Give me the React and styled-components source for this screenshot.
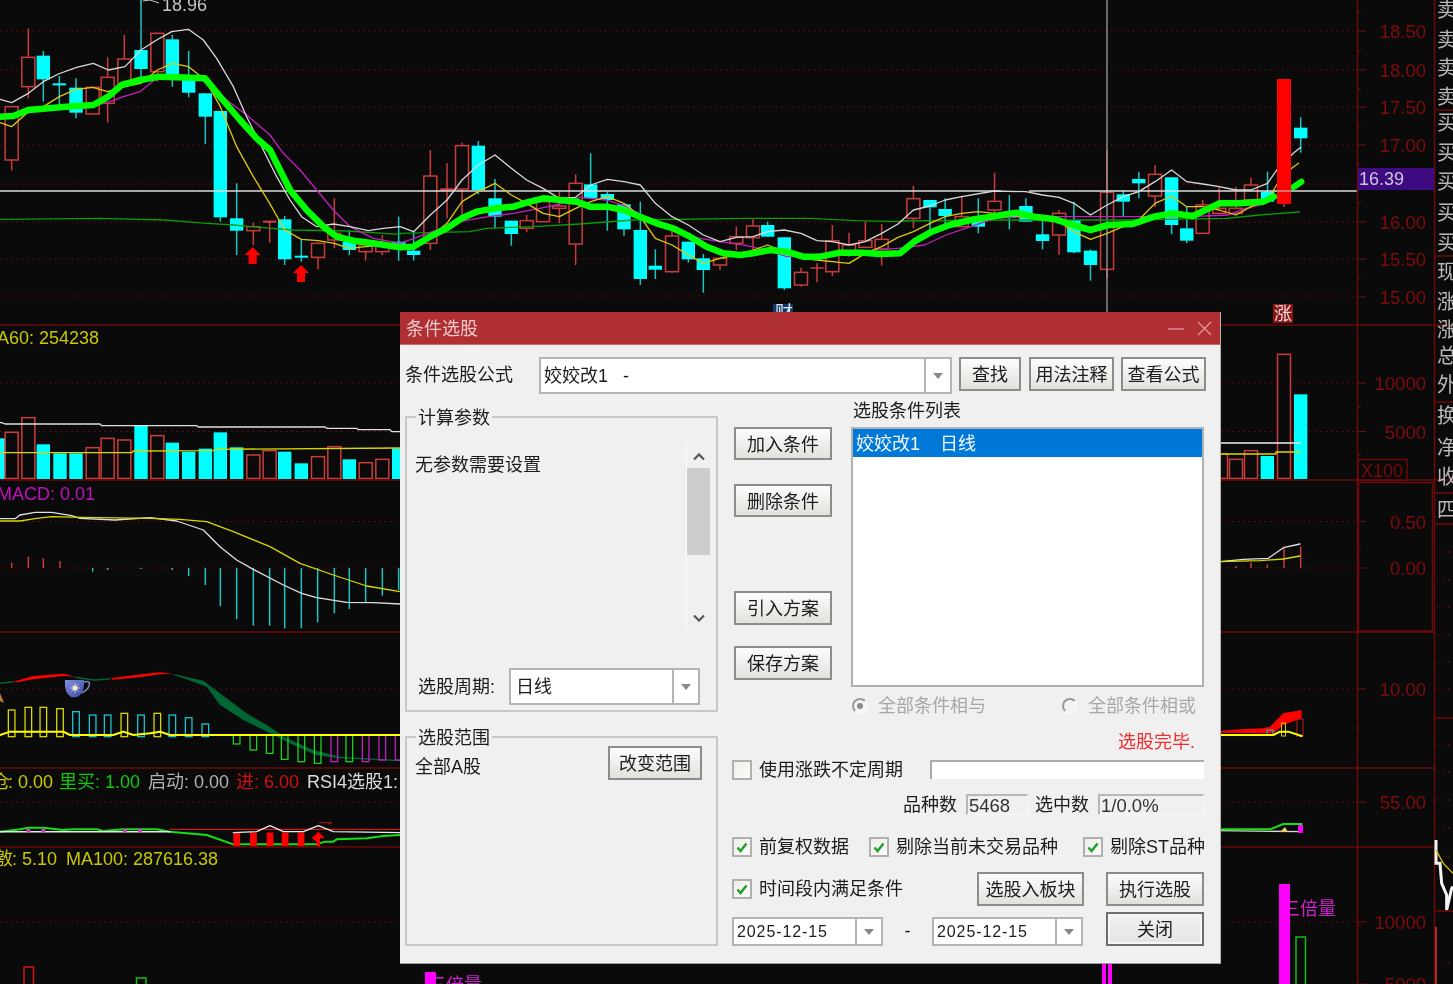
import React from "react";
import styled, { createGlobalStyle } from "styled-components";

const GlobalStyle = createGlobalStyle`
  * {
    box-sizing: border-box;
  }

  html,
  body {
    background: #0a0a0a;
    margin: 0;
    overflow: hidden;
  }
`;

const Page = styled.div`
  background: #0a0a0a;
  filter: blur(0.35px);
  font-family: "Liberation Sans", "Noto Sans CJK SC", sans-serif;
  height: 984px;
  overflow: hidden;
  position: relative;
  width: 1453px;
`;

/* ---------- chart ---------- */

const ChartSvg = styled.svg`
  display: block;
`;

const AxisLabel = styled.text`
  fill: #7e0c0c;
  font-size: 18.5px;
  text-anchor: end;
`;

const ChartText = styled.text`
  fill: ${(props) => props.$color || "#c8c800"};
  font-size: 18px;
`;

const SideGlyph = styled.text`
  fill: #b8b8b8;
  font-size: 20px;
`;

// the zoomed crops of the chart, mapped back to page pixels
const left = (x, y) => [x / 3, y / 3];
const mid = (x, y) => [400 + x / 3, 100 + y / 3];
const right = (x, y) => [900 + x / 2.835, y / 3];
const lower = (x, y) => [x / 3, 320 + y / 3];
const bottom = (x, y) => [x / 3, 650 + y / 3];
const rightLower = (x, y) => [1220 + x / 3, 320 + y / 3];
const rightBottom = (x, y) => [1220 + x / 3, 650 + y / 3];

const toPoints = (map, flat) => {
  const out = [];
  for (let i = 0; i < flat.length; i += 2) out.push(map(flat[i], flat[i + 1]).join(","));
  return out.join(" ");
};

const CANDLES = [
  [left, [[35, 320, 480, 320, 512, "h"], [85, 172, 260, 85, 295, "h"], [130, 167, 238, 153, 305, "c"], [178, 250, 256, 228, 315, "c"], [228, 263, 338, 235, 355, "c"], [278, 262, 342, 262, 342, "h"], [323, 232, 310, 172, 368, "h"], [373, 177, 255, 105, 255, "h"], [423, 150, 207, 0, 235, "c"], [472, 100, 215, 98, 245, "h"], [517, 118, 225, 105, 260, "c"], [566, 235, 278, 153, 292, "c"], [616, 280, 350, 280, 432, "c"], [661, 333, 652, 333, 665, "c"], [710, 655, 692, 550, 765, "c"], [760, 680, 692, 668, 735, "h"], [809, 662, 668, 662, 728, "r"], [854, 658, 778, 648, 795, "c"], [904, 767, 773, 720, 785, "c"], [954, 730, 772, 730, 808, "h"], [1003, 700, 720, 595, 745, "h"], [1048, 725, 750, 690, 765, "c"], [1097, 735, 755, 735, 782, "h"], [1147, 735, 755, 705, 765, "h"], [1196, 725, 745, 650, 782, "c"]]],
  [mid, [[41, 452, 465, 395, 482, "c"], [91, 228, 430, 150, 450, "h"], [141, 265, 272, 190, 355, "r"], [186, 137, 267, 128, 350, "h"], [235, 137, 270, 123, 283, "c"], [285, 295, 350, 237, 385, "c"], [334, 362, 402, 362, 437, "c"], [380, 362, 385, 345, 397, "h"], [429, 305, 365, 305, 365, "h"], [478, 318, 325, 275, 370, "h"], [527, 250, 432, 223, 495, "h"], [572, 253, 295, 160, 295, "c"], [622, 282, 300, 275, 392, "c"], [672, 313, 388, 313, 407, "c"], [721, 390, 537, 305, 555, "c"], [766, 497, 509, 448, 537, "c"], [816, 408, 515, 390, 520, "h"], [865, 425, 478, 425, 488, "c"], [910, 475, 510, 462, 578, "c"], [960, 475, 495, 475, 510, "h"], [1009, 410, 430, 380, 450, "h"], [1059, 378, 413, 358, 450, "h"], [1103, 375, 410, 365, 410, "c"], [1153, 412, 565, 412, 570, "c"], [1203, 517, 555, 503, 560, "h"], [1251, 502, 506, 490, 547, "r"], [1297, 422, 515, 375, 528, "h"], [1347, 435, 460, 398, 470, "h"], [1396, 422, 442, 365, 442, "h"], [1445, 418, 447, 372, 497, "h"]]],
  [right, [[38, 596, 655, 558, 685, "h"], [85, 600, 622, 600, 690, "c"], [128, 627, 648, 595, 690, "c"], [175, 650, 680, 590, 680, "h"], [222, 650, 680, 595, 700, "c"], [268, 604, 630, 518, 650, "h"], [310, 648, 654, 585, 688, "c"], [357, 618, 665, 595, 665, "c"], [404, 703, 723, 660, 748, "c"], [451, 640, 705, 630, 765, "h"], [493, 660, 757, 605, 760, "c"], [540, 752, 795, 748, 842, "c"], [587, 577, 808, 450, 835, "h"], [633, 583, 605, 570, 648, "c"], [677, 537, 550, 515, 595, "c"], [723, 523, 588, 495, 620, "h"], [770, 532, 675, 532, 702, "c"], [813, 685, 722, 620, 730, "c"], [858, 615, 700, 600, 700, "h"], [905, 625, 640, 560, 640, "h"], [952, 625, 640, 560, 640, "h"], [995, 555, 600, 533, 625, "h"], [1042, 575, 605, 515, 605, "c"], [1136, 383, 415, 352, 458, "c"]]],
];

const Candles = () =>
  CANDLES.flatMap(([map, list], g) =>
    list.map(([zx, top, bot, wickTop, wickBot, kind], i) => {
      const [x, y1] = map(zx, top);
      const y2 = map(zx, bot)[1];
      const w1 = map(zx, wickTop)[1];
      const w2 = map(zx, wickBot)[1];
      const stroke = kind === "c" ? "#1cc4c4" : "#c83c3c";
      return (
        <g key={`${g}-${i}`}>
          <line x1={x} x2={x} y1={w1} y2={w2} stroke={stroke} strokeWidth="1.5" />
          {kind === "h" ? (
            <rect x={x - 6.5} y={y1} width="13" height={y2 - y1} fill="#0a0a0a" stroke="#c83c3c" strokeWidth="1.5" />
          ) : (
            <rect x={x - 6.7} y={y1} width="13.4" height={y2 - y1} fill={kind === "c" ? "#00ffff" : "#d84040"} />
          )}
        </g>
      );
    })
  );

const WHITE_MA = [
  [left, [0, 298, 35, 308, 85, 280, 130, 245, 175, 222, 230, 202, 280, 190, 325, 210, 375, 200, 423, 150, 470, 120, 515, 95, 565, 88, 610, 120, 650, 175, 700, 260, 740, 350, 790, 450, 830, 530, 870, 600, 905, 650, 950, 680, 1000, 672, 1050, 680, 1105, 692, 1150, 685, 1200, 680]],
  [mid, [41, 395, 91, 345, 141, 300, 186, 240, 235, 195, 285, 165, 334, 205, 380, 240, 429, 265, 478, 295, 527, 292, 572, 255, 622, 238, 672, 245, 721, 255, 766, 310, 816, 350, 865, 375, 910, 405, 960, 425, 1009, 412, 1059, 410, 1103, 395, 1153, 390, 1203, 400, 1251, 422, 1297, 425, 1347, 435, 1396, 425, 1445, 400, 1494, 372]],
  [right, [38, 630, 85, 618, 128, 600, 175, 590, 268, 573, 357, 575, 404, 585, 451, 592, 493, 610, 540, 645, 587, 615, 633, 590, 677, 575, 723, 545, 770, 510, 813, 545, 858, 552, 905, 560, 952, 570, 995, 570, 1042, 550, 1068, 510, 1115, 460, 1136, 442]],
];

const YELLOW_MA = [
  [left, [0, 368, 35, 380, 85, 335, 130, 320, 178, 290, 228, 268, 278, 262, 323, 275, 373, 260, 423, 250, 472, 210, 517, 190, 566, 200, 616, 240, 661, 320, 710, 440, 760, 530, 809, 610, 854, 690, 904, 718, 954, 722, 1003, 730, 1048, 745, 1097, 740, 1147, 735]],
  [mid, [41, 440, 91, 410, 141, 370, 186, 305, 235, 275, 285, 250, 334, 285, 380, 310, 429, 340, 478, 350, 527, 325, 572, 305, 622, 290, 672, 310, 721, 350, 766, 415, 816, 435, 865, 465, 910, 490, 960, 475, 1009, 465, 1059, 450, 1103, 435, 1153, 455, 1203, 475, 1251, 480, 1297, 485, 1347, 490, 1396, 460, 1445, 440, 1494, 412]],
  [right, [38, 695, 85, 670, 128, 650, 175, 640, 222, 635, 268, 640, 451, 665, 493, 695, 540, 718, 587, 700, 677, 660, 723, 610, 770, 588, 813, 620, 858, 620, 905, 630, 952, 645, 995, 620, 1042, 600, 1068, 555, 1110, 505, 1130, 490]],
];

const MAGENTA_MA = [
  [left, [270, 320, 330, 305, 370, 290, 420, 275, 470, 235, 520, 225, 600, 235, 640, 270, 740, 345, 810, 405, 850, 460, 900, 510, 950, 570, 1000, 630, 1050, 680, 1120, 715, 1200, 730]],
  [mid, [180, 365, 250, 352, 340, 340, 420, 325, 480, 312, 540, 292, 620, 300, 680, 320, 760, 365, 840, 395, 900, 415, 960, 425, 1040, 437, 1100, 450, 1160, 470, 1494, 445]],
  [right, [70, 735, 130, 705, 200, 680, 270, 655, 350, 650, 820, 650, 930, 645, 980, 625, 1020, 615]],
];

const GREEN_THIN = [
  [left, [0, 658, 300, 655, 495, 660, 590, 668, 700, 675, 780, 682, 880, 690, 1040, 693, 1200, 703]],
  [mid, [0, 400, 210, 395, 260, 385, 400, 380, 540, 372, 700, 360, 1030, 355, 1230, 355, 1370, 362, 1500, 365]],
  [right, [0, 663, 300, 660, 640, 660, 925, 655, 1020, 645, 1132, 636]],
];

const GREEN_THICK = [
  [left, [0, 350, 40, 348, 85, 330, 130, 326, 180, 322, 230, 318, 280, 315, 325, 290, 365, 255, 420, 240, 480, 230, 530, 232, 615, 235, 660, 290, 720, 360, 770, 415, 810, 450, 840, 510, 870, 570, 920, 630, 970, 680, 1010, 710, 1060, 722, 1120, 730, 1200, 742]],
  [mid, [40, 440, 90, 410, 140, 385, 185, 355, 230, 335, 285, 325, 340, 320, 390, 305, 430, 295, 480, 300, 530, 305, 570, 320, 620, 320, 670, 330, 720, 350, 770, 370, 820, 385, 870, 410, 920, 440, 970, 460, 1020, 465, 1060, 460, 1110, 450, 1160, 455, 1210, 470, 1260, 470, 1320, 458, 1390, 458, 1440, 462, 1500, 460]],
  [right, [40, 725, 90, 695, 140, 675, 200, 660, 270, 648, 330, 638, 380, 650, 440, 658, 490, 675, 540, 690, 590, 675, 660, 672, 720, 650, 770, 640, 830, 648, 870, 628, 905, 610, 960, 610, 1030, 605, 1060, 590]],
];

const joinLine = (segs) => segs.map(([map, flat]) => toPoints(map, flat)).join(" ");

const Line = ({ points, color, width = 1.3 }) => (
  <polyline points={points} fill="none" stroke={color} strokeWidth={width} strokeLinejoin="round" strokeLinecap="round" />
);

const Dotted = ({ y, x1 = 0, x2 = 1357 }) => (
  <line x1={x1} x2={x2} y1={y} y2={y} stroke="#701010" strokeDasharray="1.5 4" />
);

const Rule = ({ x1 = 0, x2 = 1434, y }) => <line x1={x1} x2={x2} y1={y} y2={y} stroke="#6e0a0a" strokeWidth="1.5" />;

const Arrow = ({ x, y }) => (
  <polygon points={`${x},${y} ${x + 8},${y + 8} ${x + 4},${y + 8} ${x + 4},${y + 17} ${x - 4},${y + 17} ${x - 4},${y + 8} ${x - 8},${y + 8}`} fill="#ff0000" />
);

const MAIN_GRID = [31, 70, 107, 145, 184, 222, 259, 296];

const MainPanel = () => (
  <g>
    {MAIN_GRID.map((y) => (
      <Dotted key={y} y={y} />
    ))}
    <Candles />
    <line x1="1107" x2="1107" y1="0" y2="312" stroke="#a8a8a8" strokeWidth="1.2" />
    <line x1="0" x2="1001" y1="191" y2="191" stroke="#dcdcdc" strokeWidth="1.5" />
    <line x1="1029" x2="1357" y1="191" y2="191" stroke="#dcdcdc" strokeWidth="1.5" />
    <Line points={joinLine(GREEN_THIN)} color="#0a9a0a" />
    <Line points={joinLine(MAGENTA_MA)} color="#c020c0" />
    <Line points={joinLine(YELLOW_MA)} color="#e0c810" />
    <Line points={joinLine(WHITE_MA)} color="#d8d8d8" />
    <Line points={joinLine(GREEN_THICK)} color="#00ff00" width={6.5} />
    <Line points={toPoints(right, [1115, 562, 1138, 545])} color="#00ff00" width={6} />
    <rect x="1277" y="79" width="14" height="125" fill="#ff0000" />
    <line x1="1284" x2="1284" y1="204" y2="207" stroke="#c83c3c" strokeWidth="1.5" />
    <line x1="1277" x2="1291" y1="191" y2="191" stroke="#d09090" strokeWidth="1.5" />
    <line x1="141" x2="141" y1="0" y2="3" stroke="#1cc4c4" />
    <polyline points="143,1 150,0 159,3" fill="none" stroke="#c8c8c8" />
    <ChartText x="162" y="11" $color="#c4c4c4">18.96</ChartText>
    <Arrow x={252.7} y={247} />
    <Arrow x={301} y={265} />
    <rect x="773" y="304" width="20" height="10" fill="#0a3a70" />
    <ChartText x="775" y="319" $color="#e8e8e8">财</ChartText>
    <rect x="1273" y="304" width="20" height="19" fill="#8a1414" />
    <ChartText x="1274" y="320" $color="#f0d8d8">涨</ChartText>
  </g>
);

const VOLUME = [
  [-2, 355, "c"], [35, 337, "h"], [85, 293, "h"], [130, 373, "c"], [180, 400, "c"], [228, 400, "c"], [278, 383, "h"], [323, 355, "h"], [373, 360, "h"], [423, 317, "c"], [472, 347, "h"], [517, 368, "c"], [566, 395, "c"], [616, 386, "c"], [661, 337, "c"], [710, 382, "c"], [760, 405, "h"], [809, 392, "h"], [854, 395, "c"], [904, 430, "c"], [954, 410, "h"], [1003, 380, "h"], [1048, 418, "c"], [1097, 428, "h"], [1147, 418, "h"], [1196, 385, "c"],
  [3663, 402, "h"], [3708, 418, "h"], [3753, 392, "h"], [3802, 408, "c"], [3852, 103, "h"], [3902, 223, "c"],
];

const VolumePanel = () => (
  <g>
    <Dotted y={383} />
    <Dotted y={431.5} />
    {VOLUME.map(([zx, top, kind]) => {
      const [x, y] = lower(zx, top);
      return kind === "h" ? (
        <rect key={zx} x={x - 6.5} y={y} width="13" height={478.5 - y} fill="#0a0a0a" stroke="#c83c3c" strokeWidth="1.5" />
      ) : (
        <rect key={zx} x={x - 6.7} y={y} width="13.4" height={479 - y} fill="#00ffff" />
      );
    })}
    <Line points={toPoints(lower, [0, 308, 5, 308, 15, 312, 300, 312, 305, 317, 590, 317, 595, 321, 975, 321, 980, 325, 1070, 325, 1075, 329, 1170, 329, 1175, 335, 1200, 335])} color="#e0e0e0" />
    <Line points={toPoints(lower, [0, 398, 395, 398, 400, 393, 640, 392, 645, 388, 1200, 384])} color="#d8d800" />
    <Line points="1220,443 1300,443" color="#f0f0f0" />
    <Line points="1220,454 1276,454 1276,452 1300,452" color="#d8d800" />
    <ChartText x="-3" y="344">A60: 254238</ChartText>
  </g>
);

const MACD_BARS = [
  [35, 728], [85, 710], [130, 715], [180, 723], [278, 755], [323, 750], [423, 747], [517, 750], [566, 768], [616, 795], [661, 858], [710, 898], [760, 917], [809, 917], [854, 925], [904, 925], [953, 907], [1003, 880], [1048, 867], [1097, 847], [1147, 827], [1196, 810],
];

const MacdPanel = () => (
  <g>
    <Dotted y={521.5} />
    <Dotted y={568} />
    {MACD_BARS.map(([zx, end]) => {
      const [x, y] = lower(zx, end);
      return <line key={zx} x1={x} x2={x} y1="568" y2={y} stroke={end < 744 ? "#c83c3c" : "#1cc4c4"} strokeWidth="1.5" />;
    })}
    {[[48, 738], [93, 728], [142, 733], [192, 683], [242, 680]].map(([zx, end]) => {
      const [x, y] = rightLower(zx, end);
      return <line key={zx} x1={x} x2={x} y1="568" y2={y} stroke="#c83c3c" strokeWidth="1.5" />;
    })}
    <Line points={toPoints(lower, [0, 596, 45, 596, 60, 585, 105, 577, 155, 577, 215, 587, 240, 595, 345, 600, 450, 593, 530, 603, 610, 630, 660, 680, 710, 720, 760, 748, 850, 795, 905, 820, 950, 833, 1040, 847, 1120, 848, 1200, 852])} color="#e0e0e0" />
    <Line points={toPoints(lower, [0, 603, 60, 603, 105, 596, 155, 590, 240, 592, 450, 595, 540, 598, 620, 605, 700, 635, 810, 680, 900, 730, 1000, 765, 1100, 798, 1200, 815])} color="#d8d800" />
    <Line points={toPoints(rightLower, [0, 725, 70, 718, 145, 715, 190, 683, 240, 672])} color="#e0e0e0" />
    <Line points={toPoints(rightLower, [0, 725, 120, 722, 190, 717, 240, 708])} color="#d8d800" />
    <ChartText x="-3" y="500" $color="#c010c0">MACD: 0.01</ChartText>
  </g>
);

const HOLLOW_BARS = [
  [35, 180, "#d8d800"], [85, 172, "#d8d800"], [130, 172, "#d8d800"], [180, 176, "#d8d800"], [228, 185, "#1cc4d4"], [278, 195, "#1cc4d4"], [323, 195, "#1cc4d4"], [373, 190, "#d8d800"], [423, 195, "#1cc4d4"], [472, 190, "#d8d800"], [517, 195, "#1cc4d4"], [566, 203, "#1cc4d4"], [616, 222, "#1cc4d4"],
  [710, 282, "#20d020"], [760, 300, "#20d020"], [809, 310, "#20d020"], [854, 328, "#20d020"], [904, 335, "#20d020"], [953, 340, "#20d020"], [1003, 335, "#c020c0"], [1048, 335, "#20d020"], [1097, 335, "#c020c0"], [1147, 330, "#c020c0"], [1196, 330, "#c020c0"],
];

const Cup = () => (
  <g>
    <defs>
      <linearGradient id="cupFill" x1="0" x2="1" y1="0" y2="1">
        <stop offset="0" stopColor="#8090e0" />
        <stop offset="1" stopColor="#3c48a8" />
      </linearGradient>
    </defs>
    <path d="M84 682 q7 -2 5 4 q-2 5 -8 7" fill="none" stroke="#8088c0" strokeWidth="1.5" />
    <path d="M65 680 h19 q1 11 -5 16 q-3 2 -8 1 q-7 -4 -6 -17z" fill="url(#cupFill)" />
    <circle cx="75" cy="688" r="2.5" fill="#fff8d0" />
    <path d="M75 683 v10 M70 688 h10 M71.5 684.5 l7 7 M78.5 684.5 l-7 7" stroke="#e8e8c0" strokeWidth="0.8" />
  </g>
);

const SignalPanel = () => (
  <g>
    <Dotted y={689} />
    <polyline points={toPoints(bottom, [0, 100, 40, 95])} fill="none" stroke="#006633" strokeWidth="1.5" />
    <polygon points={toPoints(bottom, [40, 95, 100, 78, 190, 71, 225, 80, 190, 78, 100, 88, 50, 97])} fill="#ff0000" />
    <polyline points={toPoints(bottom, [225, 82, 280, 90, 330, 87])} fill="none" stroke="#006633" strokeWidth="1.5" />
    <polygon points={toPoints(bottom, [330, 85, 430, 72, 480, 67, 520, 72, 480, 73, 430, 80, 340, 89])} fill="#ff0000" />
    <polygon points={toPoints(bottom, [520, 72, 610, 92, 660, 130, 740, 190, 800, 225, 860, 265, 940, 300, 1020, 320, 1200, 330, 1200, 334, 1020, 325, 950, 316, 880, 285, 810, 250, 730, 210, 660, 165, 620, 110, 560, 88, 520, 75])} fill="#006633" />
    {HOLLOW_BARS.map(([zx, end, color]) => {
      const [x, y] = bottom(zx, end);
      const y0 = end < 255 ? 650 + 260 / 3 : 650 + 256 / 3;
      return <rect key={zx} x={x - 3.3} y={Math.min(y, y0)} width="6.6" height={Math.abs(y - y0)} fill="none" stroke={color} strokeWidth="1.3" />;
    })}
    <Line points={toPoints(bottom, [0, 255, 30, 245, 190, 245, 210, 255, 340, 255, 370, 245, 400, 255, 450, 250, 480, 245, 510, 255, 1200, 255])} color="#ffff00" width={2} />
    <Cup />
    <polygon points="0,693 4,703 0,701" fill="#c08030" />
    <polygon points={toPoints(rightBottom, [0, 243, 60, 238, 130, 235, 150, 230, 190, 190, 245, 180, 245, 205, 190, 225, 160, 250, 0, 248])} fill="#ff0000" />
    <rect x="1267" y="730" width="6" height="5" fill="none" stroke="#1cc4d4" />
    <rect x="1281.5" y="723" width="4" height="13" fill="none" stroke="#d8c800" />
    <rect x="1297" y="719" width="6" height="17" fill="none" stroke="#c01818" />
    <Line points={toPoints(rightBottom, [0, 255, 160, 255, 180, 245, 205, 245, 245, 258])} color="#ffff00" width={2} />
    <ChartText x="-8" y="788">仓</ChartText>
    <ChartText x="8" y="788">: 0.00</ChartText>
    <ChartText x="59" y="788" $color="#10c810">里买: 1.00</ChartText>
    <ChartText x="148" y="788" $color="#b0b0b0">启动: 0.00</ChartText>
    <ChartText x="236" y="788" $color="#d01010">进: 6.00</ChartText>
    <ChartText x="307" y="788" $color="#dcdcdc">RSI4选股1:</ChartText>
  </g>
);

const RsiPanel = () => (
  <g>
    <Dotted y={802} />
    <Line points={toPoints(bottom, [510, 538, 1200, 538])} color="#d01818" />
    <Line points={toPoints(bottom, [0, 545, 60, 538, 85, 533, 130, 533, 190, 540, 220, 538, 290, 538, 310, 543, 370, 538, 470, 538, 510, 545, 620, 555, 700, 583, 950, 583, 975, 575, 1000, 575, 1010, 568, 1100, 565, 1150, 558, 1200, 555])} color="#14e014" width={2} />
    <Line points={toPoints(bottom, [0, 545, 510, 545])} color="#e8e8e8" width={1.5} />
    {[700, 750, 800, 845, 893].map((zx) => (
      <rect key={zx} x={zx / 3} y={832.5} width="6.8" height="14" fill="#ff0000" />
    ))}
    <Line points={toPoints(bottom, [700, 548, 770, 545, 810, 527, 850, 545, 910, 545, 955, 527, 1000, 545, 1200, 548])} color="#e8e8e8" />
    {[85, 130, 375, 420].map((zx) => (
      <rect key={zx} x={zx / 3 - 2} y="829" width="4" height="3" fill="#d040d0" />
    ))}
    <polygon points={toPoints(bottom, [955, 545, 975, 565, 960, 565, 960, 590, 950, 590, 950, 575, 935, 565])} fill="#ff0000" />
    <polyline points={toPoints(bottom, [955, 518, 995, 518, 985, 522])} fill="none" stroke="#c01818" />
    <Line points={toPoints(rightBottom, [0, 542, 245, 545])} color="#d8d8d8" />
    <Line points={toPoints(rightBottom, [0, 538, 150, 538, 190, 522, 245, 522])} color="#14e014" width={2} />
    <rect x="1298" y="825" width="5" height="8" fill="#ff00ff" />
    <polygon points="1280,832 1285,827 1288,832" fill="#e8d060" />
  </g>
);

const VolumeBottomPanel = () => (
  <g>
    <Dotted y={922} />
    <rect x="24" y="967" width="9.5" height="20" fill="none" stroke="#d01818" strokeWidth="1.5" />
    <rect x="136.5" y="978" width="9.5" height="10" fill="none" stroke="#10c010" strokeWidth="1.5" />
    <ChartText x="428" y="991" $color="#d020d0">三倍量</ChartText>
    <rect x="425" y="972" width="11" height="12" fill="#ff00ff" />
    <rect x="1102" y="964" width="4" height="20" fill="#ff00ff" />
    <rect x="1108" y="964" width="4" height="20" fill="#ff00ff" />
    <ChartText x="1282" y="915" $color="#d020d0">三倍量</ChartText>
    <rect x="1279" y="884" width="11" height="100" fill="#ff00ff" />
    <rect x="1296" y="937" width="9.5" height="50" fill="none" stroke="#10c010" strokeWidth="1.5" />
    <ChartText x="-5" y="865">敫</ChartText>
    <ChartText x="12" y="865">: 5.10</ChartText>
    <ChartText x="66" y="865">MA100: 287616.38</ChartText>
  </g>
);

const AXIS = [
  ["18.50", 31], ["18.00", 70], ["17.50", 107], ["17.00", 145], ["16.00", 222], ["15.50", 259], ["15.00", 297],
  ["10000", 383], ["5000", 431.5], ["0.50", 521.5], ["0.00", 568], ["10.00", 689], ["55.00", 802], ["10000", 922], ["5000", 984],
];

const MINOR_TICKS = [12, 51, 89, 126, 164, 203, 240, 278, 407, 455, 545, 728, 925, 960];

const SIDE_LABELS = [
  ["卖", 10], ["卖", 40], ["卖", 68], ["卖", 97], ["买", 123], ["买", 153], ["买", 182], ["买", 213], ["买", 243],
  ["现", 272], ["涨", 302], ["涨", 330], ["总", 356], ["外", 385], ["换", 416], ["净", 448], ["收", 477], ["四", 510],
];

const Axis = () => (
  <g>
    <line x1="1357.5" x2="1357.5" y1="0" y2="984" stroke="#6e0a0a" strokeWidth="1.5" />
    <line x1="1434.5" x2="1434.5" y1="0" y2="984" stroke="#6e0a0a" strokeWidth="1.5" />
    {[325, 480].map((y) => (
      <Rule key={y} y={y} x2={1453} />
    ))}
    {[632, 768, 847].map((y) => (
      <Rule key={y} y={y} />
    ))}
    {[110, 256, 402, 493, 524, 718, 911].map((y) => (
      <Rule key={y} x1={1434} x2={1453} y={y} />
    ))}
    {[552, 580, 607, 635, 662, 689, 745, 772, 800, 828, 857, 963].map((y) => (
      <Dotted key={y} y={y} x1={1437} x2={1453} />
    ))}
    <rect x="1358.5" y="482.5" width="74" height="148.5" fill="none" stroke="#6e0a0a" strokeWidth="1.5" />
    {AXIS.map(([label, y]) => (
      <g key={`${label}-${y}`}>
        <line x1="1357" x2="1366" y1={y} y2={y} stroke="#7a0a0a" />
        <AxisLabel x="1426" y={y + 7}>{label}</AxisLabel>
      </g>
    ))}
    {MINOR_TICKS.map((y) => (
      <line key={y} x1="1357" x2="1361" y1={y} y2={y} stroke="#7a0a0a" />
    ))}
    <rect x="1358" y="168" width="76" height="22" fill="#3d0a80" />
    <ChartText x="1359" y="185" $color="#c8c8d8">16.39</ChartText>
    <rect x="1358" y="459.5" width="49" height="21" fill="none" stroke="#6e0a0a" strokeWidth="1.5" />
    <ChartText x="1361" y="477" $color="#7a0a0a">X100</ChartText>
    {SIDE_LABELS.map(([glyph, y]) => (
      <SideGlyph key={y} x="1437" y={y + 7}>{glyph}</SideGlyph>
    ))}
    <polyline points={toPoints(rightBottom, [648, 570, 648, 640, 660, 640, 665, 700, 680, 735, 680, 780, 695, 715, 699, 710])} fill="none" stroke="#f4f4f4" strokeWidth="3" />
    <polyline points={toPoints(rightBottom, [648, 600, 670, 640, 699, 670])} fill="none" stroke="#d8c810" strokeWidth="1.3" />
    <line x1="1436" x2="1436" y1="927" y2="984" stroke="#c83c3c" strokeWidth="1.5" />
  </g>
);

const Chart = () => (
  <ChartSvg width="1453" height="984" viewBox="0 0 1453 984">
    <MainPanel />
    <VolumePanel />
    <MacdPanel />
    <SignalPanel />
    <RsiPanel />
    <VolumeBottomPanel />
    <Axis />
  </ChartSvg>
);

/* ---------- dialog ---------- */

const Dialog = styled.div`
  background: #f0f0f0;
  border-bottom: 1px solid #9c9c9c;
  border-right: 1px solid #b4b4b4;
  color: #1c1c1c;
  display: flex;
  flex-direction: column;
  font-size: 18px;
  height: 652px;
  left: 400px;
  line-height: 24px;
  position: absolute;
  top: 312px;
  width: 821px;
`;

const TitleBar = styled.div`
  align-items: center;
  background: #b02f33;
  border-bottom: 1px solid #c86a6a;
  color: #eec8c8;
  display: flex;
  flex: none;
  height: 33px;
  justify-content: space-between;
  padding: 1px 8px 0 6px;
`;

const TitleIcons = styled.div`
  display: flex;
  gap: 12px;
`;

const Body = styled.div`
  display: flex;
  flex-direction: column;
  padding: 12px 14px 0 5px;
`;

const FormulaRow = styled.div`
  align-items: flex-start;
  display: flex;
  height: 37px;
`;

const RowLabel = styled.div`
  flex: none;
  line-height: 36px;
  width: ${(props) => props.$width}px;
`;

const Combo = styled.div`
  background: #fff;
  border: 2px solid #b4b4b4;
  display: flex;
  flex: none;
  font-size: ${(props) => props.$fontSize || 18}px;
  height: ${(props) => props.$height || 37}px;
  letter-spacing: ${(props) => (props.$fontSize ? "0.9px" : "0")};
  width: ${(props) => props.$width}px;
`;

const ComboValue = styled.div`
  align-items: center;
  display: flex;
  flex: 1;
  padding-left: ${(props) => props.$indent || 3}px;
  padding-top: 1px;
  white-space: pre;
`;

const ComboArrow = styled.div`
  align-items: center;
  border-left: 2px solid #b4b4b4;
  display: flex;
  flex: none;
  justify-content: center;
  width: 26px;

  &::after {
    border-left: 5px solid transparent;
    border-right: 5px solid transparent;
    border-top: 6px solid #8a8a8a;
    content: "";
  }
`;

const Button = styled.button`
  background: linear-gradient(#fdfdfd, #e2e1dc);
  border: 2px solid #8c8c8a;
  color: #1c1c1c;
  flex: none;
  font-family: inherit;
  font-size: 18px;
  height: ${(props) => props.$height || 34}px;
  line-height: 24px;
  margin: ${(props) => props.$margin || 0};
  padding: 2px 0 0;
  width: ${(props) => props.$width || 98}px;
`;

const DefaultButton = styled(Button)`
  background: linear-gradient(#f2f2f2, #e4e4e2);
  border-color: #6e6e6c;
  box-shadow: inset 0 0 0 2px #f6f6f6;
`;

const Main = styled.div`
  display: flex;
`;

const LeftColumn = styled.div`
  display: flex;
  flex: none;
  flex-direction: column;
  gap: 24px;
  padding-top: 22px;
  width: 313px;
`;

const GroupBox = styled.div`
  border: 2px solid #c8c8c8;
  height: ${(props) => props.$height}px;
  position: relative;
`;

const Legend = styled.div`
  background: #f0f0f0;
  left: 9px;
  padding: 0 2px;
  position: absolute;
  top: -12px;
`;

const ParamArea = styled.div`
  display: flex;
  height: 187px;
  margin-top: 25px;
`;

const ParamText = styled.div`
  flex: 1;
  line-height: 26px;
  padding: 9px 0 0 8px;
`;

const ScrollBar = styled.div`
  border-left: 1px solid #fbfbfb;
  display: flex;
  flex: none;
  flex-direction: column;
  margin-right: 6px;
  width: 24px;
`;

const ScrollArrow = styled.div`
  align-items: ${(props) => (props.$down ? "flex-end" : "flex-start")};
  display: flex;
  flex: none;
  height: 25px;
  justify-content: center;
  padding: ${(props) => (props.$down ? "0 0 8px" : "10px 0 0")};
`;

const ScrollThumb = styled.div`
  background: #cdcdcd;
  height: 87px;
`;

const ScrollTrack = styled.div`
  flex: 1;
`;

const PeriodRow = styled.div`
  align-items: center;
  display: flex;
  margin-top: 38px;
  padding-left: 11px;
`;

const RangeRow = styled.div`
  align-items: flex-start;
  display: flex;
  justify-content: space-between;
  padding: 8px 14px 0 8px;
`;

const RangeText = styled.div`
  margin-top: 9px;
`;

const RightColumn = styled.div`
  flex: none;
  margin-left: 14px;
  width: 472px;
`;

const TopRow = styled.div`
  display: flex;
`;

const ActionColumn = styled.div`
  display: flex;
  flex: none;
  flex-direction: column;
  padding: 33px 0 0 2px;
  width: 119px;
`;

const ListColumn = styled.div`
  flex: none;
  width: 353px;
`;

const ListTitle = styled.div`
  height: 33px;
  line-height: 34px;
  padding-left: 2px;
`;

const ListBox = styled.div`
  background: #fff;
  border: 2px solid #b0b0b0;
  height: 260px;
`;

const ListRow = styled.div`
  background: #0078d7;
  color: #f4f8ff;
  height: 28px;
  line-height: 31px;
  padding-left: 3px;
  white-space: pre;
`;

const RadioRow = styled.div`
  color: #a8a8a8;
  display: grid;
  grid-template-columns: 210px 1fr;
  height: 27px;
  padding: 7px 0 0 1px;
`;

const RadioItem = styled.div`
  align-items: center;
  display: flex;
  gap: 10px;
`;

const RadioMark = styled.span`
  align-items: center;
  background: #f4f4f4;
  border: 2px solid;
  border-color: #9a9a9a #f8f8f8 #f8f8f8 #9a9a9a;
  border-radius: 50%;
  display: flex;
  height: 16px;
  justify-content: center;
  width: 16px;

  &::after {
    background: ${(props) => (props.$on ? "#8c8c8c" : "transparent")};
    border-radius: 50%;
    content: "";
    height: 6px;
    width: 6px;
  }
`;

const StatusRow = styled.div`
  color: #ef2f2f;
  height: 24px;
  margin-top: 16px;
  padding-right: 9px;
  text-align: right;
`;

const IrregularRow = styled.div`
  align-items: center;
  display: flex;
  height: 19px;
  justify-content: space-between;
  margin-top: 6px;
`;

const FreeInput = styled.div`
  background: #fff;
  border-left: 2px solid #ababab;
  border-top: 2px solid #ababab;
  height: 19px;
  width: 274px;
`;

const CountRow = styled.div`
  align-items: center;
  display: flex;
  height: 21px;
  justify-content: flex-end;
  margin-top: 15px;
`;

const ReadonlyField = styled.div`
  border-bottom: 1px solid #fafafa;
  border-left: 2px solid #b8b8b8;
  border-right: 1px solid #fafafa;
  border-top: 2px solid #b8b8b8;
  color: #333;
  font-size: 18.5px;
  height: 21px;
  line-height: 19px;
  margin: ${(props) => props.$margin};
  padding-left: 1px;
  width: ${(props) => props.$width}px;
`;

const CheckGrid = styled.div`
  display: grid;
  grid-template-columns: 137px 214px 1fr;
  height: 20px;
  margin-top: 20px;
`;

const CheckItem = styled.div`
  align-items: center;
  display: flex;
  gap: 7px;
  white-space: nowrap;
`;

const CheckBox = styled.span`
  align-items: center;
  background: linear-gradient(135deg, #efeee8, #fbfbfb);
  border: 2px solid #b0b0b0;
  display: flex;
  flex: none;
  height: 20px;
  justify-content: center;
  width: 20px;
`;

const BottomArea = styled.div`
  display: flex;
  gap: 22px;
  margin-top: 17px;
`;

const BottomLeft = styled.div`
  flex: none;
  width: 352px;
`;

const TimeRow = styled.div`
  align-items: center;
  display: flex;
  height: 34px;
  justify-content: space-between;
`;

const DateRow = styled.div`
  display: flex;
  height: 29px;
  margin-top: 11px;
`;

const DateDash = styled.div`
  flex: none;
  line-height: 29px;
  text-align: center;
  width: 49px;
`;

const BottomRight = styled.div`
  display: flex;
  flex-direction: column;
  gap: 6px;
`;

const Check = ({ on, children }) => (
  <CheckItem>
    <CheckBox>
      {on && (
        <svg width="12" height="11" viewBox="0 0 12 11">
          <path d="M1.5 5.5 L4.5 9 L10.5 1.5" fill="none" stroke="#1fa02a" strokeWidth="2.4" />
        </svg>
      )}
    </CheckBox>
    {children}
  </CheckItem>
);

const Chevron = ({ down }) => (
  <svg width="12" height="8" viewBox="0 0 12 8">
    <path d={down ? "M1 1.5 L6 6.5 L11 1.5" : "M1 6.5 L6 1.5 L11 6.5"} fill="none" stroke="#555" strokeWidth="2.2" />
  </svg>
);

const WindowIcon = ({ children }) => (
  <svg width="16" height="16" viewBox="0 0 16 16" fill="none" stroke="#e09a9a" strokeWidth="1.3">
    {children}
  </svg>
);

const DateCombo = ({ children }) => (
  <Combo $width={151} $height={29} $fontSize={16}>
    <ComboValue>{children}</ComboValue>
    <ComboArrow />
  </Combo>
);

const ConditionDialog = () => (
  <Dialog>
    <TitleBar>
      条件选股
      <TitleIcons>
        <WindowIcon>
          <path d="M0 8 H16" />
        </WindowIcon>
        <WindowIcon>
          <path d="M2 1 L15 14 M15 1 L2 14" />
        </WindowIcon>
      </TitleIcons>
    </TitleBar>
    <Body>
      <FormulaRow>
        <RowLabel $width={134}>条件选股公式</RowLabel>
        <Combo $width={413}>
          <ComboValue>{"姣姣改1   -"}</ComboValue>
          <ComboArrow />
        </Combo>
        <Button $width={62} $margin="0 0 0 7px">查找</Button>
        <Button $width={85} $margin="0 0 0 8px">用法注释</Button>
        <Button $width={85} $margin="0 0 0 7px">查看公式</Button>
      </FormulaRow>
      <Main>
        <LeftColumn>
          <GroupBox $height={296}>
            <Legend>计算参数</Legend>
            <ParamArea>
              <ParamText>无参数需要设置</ParamText>
              <ScrollBar>
                <ScrollArrow>
                  <Chevron />
                </ScrollArrow>
                <ScrollThumb />
                <ScrollTrack />
                <ScrollArrow $down>
                  <Chevron down />
                </ScrollArrow>
              </ScrollBar>
            </ParamArea>
            <PeriodRow>
              <RowLabel $width={91}>选股周期:</RowLabel>
              <Combo $width={191}>
                <ComboValue $indent={5}>日线</ComboValue>
                <ComboArrow />
              </Combo>
            </PeriodRow>
          </GroupBox>
          <GroupBox $height={210}>
            <Legend>选股范围</Legend>
            <RangeRow>
              <RangeText>全部A股</RangeText>
              <Button $width={94}>改变范围</Button>
            </RangeRow>
          </GroupBox>
        </LeftColumn>
        <RightColumn>
          <TopRow>
            <ActionColumn>
              <Button $height={33}>加入条件</Button>
              <Button $height={33} $margin="24px 0 0">删除条件</Button>
              <Button $margin="74px 0 0">引入方案</Button>
              <Button $margin="21px 0 0">保存方案</Button>
            </ActionColumn>
            <ListColumn>
              <ListTitle>选股条件列表</ListTitle>
              <ListBox>
                <ListRow>{"姣姣改1    日线"}</ListRow>
              </ListBox>
              <RadioRow>
                <RadioItem>
                  <RadioMark $on />
                  全部条件相与
                </RadioItem>
                <RadioItem>
                  <RadioMark />
                  全部条件相或
                </RadioItem>
              </RadioRow>
            </ListColumn>
          </TopRow>
          <StatusRow>选股完毕.</StatusRow>
          <IrregularRow>
            <Check>使用涨跌不定周期</Check>
            <FreeInput />
          </IrregularRow>
          <CountRow>
            品种数
            <ReadonlyField $width={62} $margin="0 7px 0 9px">5468</ReadonlyField>
            选中数
            <ReadonlyField $width={106} $margin="0 0 0 9px">1/0.0%</ReadonlyField>
          </CountRow>
          <CheckGrid>
            <Check on>前复权数据</Check>
            <Check on>剔除当前未交易品种</Check>
            <Check on>剔除ST品种</Check>
          </CheckGrid>
          <BottomArea>
            <BottomLeft>
              <TimeRow>
                <Check on>时间段内满足条件</Check>
                <Button $width={107}>选股入板块</Button>
              </TimeRow>
              <DateRow>
                <DateCombo>2025-12-15</DateCombo>
                <DateDash>-</DateDash>
                <DateCombo>2025-12-15</DateCombo>
              </DateRow>
            </BottomLeft>
            <BottomRight>
              <Button>执行选股</Button>
              <DefaultButton>关闭</DefaultButton>
            </BottomRight>
          </BottomArea>
        </RightColumn>
      </Main>
    </Body>
  </Dialog>
);

export default function App() {
  return (
    <Page>
      <GlobalStyle />
      <Chart />
      <ConditionDialog />
    </Page>
  );
}
